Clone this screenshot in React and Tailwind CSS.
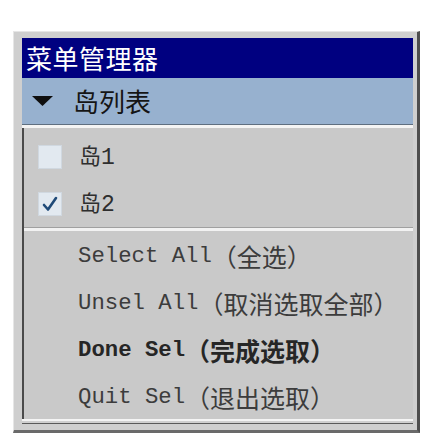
import React from 'react'

const mono = { fontFamily: '"Liberation Mono", "Noto Sans CJK SC", monospace' }
const cjk = { fontFamily: '"Noto Sans CJK SC", sans-serif' }

const Checkbox = ({ checked }) => (
    <div className='w-[24px] h-[24px] bg-[#e2e9f0] border border-[#d0d8e0] flex items-center justify-center'>
        {checked &&
        <svg width='18' height='18' viewBox='0 0 18 18'>
            <path d='M3 10 L7 14.5 L15 3' stroke='#1f4a78' strokeWidth='2.6' fill='none' strokeLinecap='round' strokeLinejoin='round' />
        </svg>
        }
    </div>
)

const IslandRow = ({ label, checked }) => (
    <div className='h-[47px] flex items-center pl-[14px] gap-[17px]'>
        <Checkbox checked={checked} />
        <span className='text-[22px] leading-none text-[#2e2e2e]'>
            <span style={cjk} className='text-[22px]'>岛</span>
            <span style={mono} className='text-[23px]'>{label}</span>
        </span>
    </div>
)

const MenuItem = ({ en, zh, bold }) => (
    <div className={`h-[47px] flex items-center pl-[54px] pt-[3px] whitespace-nowrap ${bold ? 'font-bold text-[#262626]' : 'text-[#3c3c3c]'}`}>
        <span style={mono} className='text-[22.3px] leading-none'>{en}</span>
        <span style={cjk} className='text-[25px] leading-none'>{zh}</span>
    </div>
)

const App = () => {
  return (
    <div className='w-[436px] h-[436px] bg-white pt-[31px] pl-[13px]'>
        <div className='w-[407px] h-[402px] bg-[#cfcfcf] border-l border-t border-[#e6e6e6] border-r-[3px] border-r-[#4e4e4e] border-b-[3px] border-b-[#6a6a6a] pl-[8px] pt-[6px] pr-[4px]'>
            <div className='w-[391px] h-[40px] bg-[#000080] flex items-center pl-[4px]'>
                <span style={cjk} className='text-white text-[26px] leading-none tracking-[0.5px]'>菜单管理器</span>
            </div>
            <div className='w-[391px] h-[47px] bg-[#97b1cf] border-b border-[#5f6f80] flex items-center pl-[10px] gap-[20px]'>
                <svg width='21' height='10' viewBox='0 0 21 10'>
                    <path d='M0 0 L21 0 L10.5 10 Z' fill='#0f0f0f' />
                </svg>
                <span style={cjk} className='text-[#151515] text-[26px] leading-none'>岛列表</span>
            </div>
            <div className='w-[391px] h-[3px] bg-[#f4f4f4]'></div>
            <div className='w-[391px] h-[291px] bg-[#c9c9c9] border-l-2 border-[#4a4a4a] pt-[5px]'>
                <IslandRow label='1' />
                <IslandRow label='2' checked />
                <div className='h-[1px] bg-[#a0a0a0]'></div>
                <div className='h-[3px] bg-[#f2f2f2]'></div>
                <MenuItem en='Select All' zh='（全选）' />
                <MenuItem en='Unsel All' zh='（取消选取全部）' />
                <MenuItem en='Done Sel' zh='（完成选取）' bold />
                <MenuItem en='Quit Sel' zh='（退出选取）' />
            </div>
            <div className='w-[391px] h-[2px] bg-[#f4f4f4]'></div>
            <div className='w-[391px] h-[2px] bg-[#cfcfcf]'></div>
            <div className='w-[391px] h-[1px] bg-[#5a5a5a]'></div>
        </div>
    </div>
  )
}

export default App
